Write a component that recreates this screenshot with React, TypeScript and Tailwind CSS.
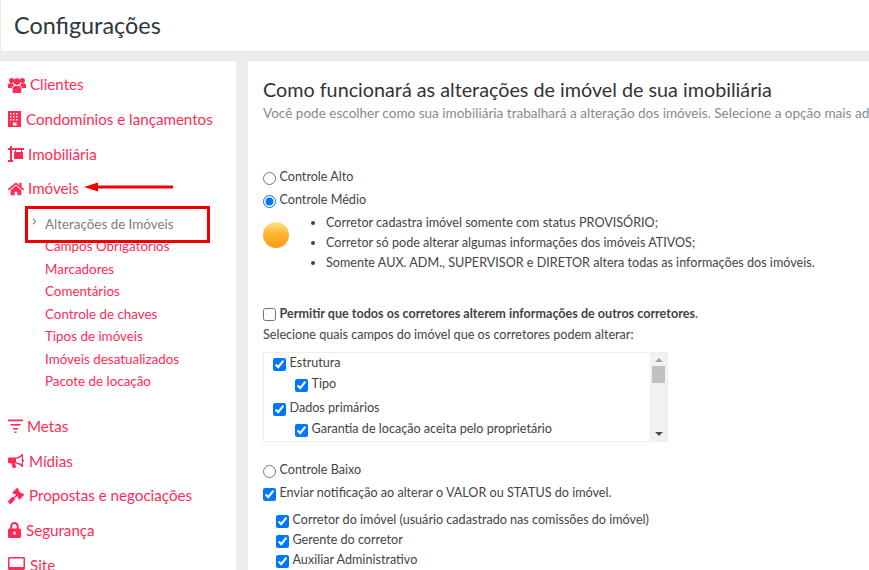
import React from "react";
import { FaHome, FaGavel, FaChevronRight } from "react-icons/fa";

const Svg = ({ w, h, children }: { w: number; h: number; children: React.ReactNode }) => (
  <svg width={w} height={h} viewBox={`0 0 ${w} ${h}`} fill="currentColor" className="shrink-0">{children}</svg>
);

const Users = () => (
  <Svg w={18} h={16}>
    <circle cx="3.6" cy="3.4" r="2.5" />
    <circle cx="14.4" cy="3.4" r="2.5" />
    <circle cx="9" cy="4.6" r="3.3" />
    <path d="M0 11V8.3C0 7 1 6.3 2.2 6.3H4.6C4.9 7.4 5.4 8 6 8.6 4.7 9.1 4 10 3.8 11.2Z" />
    <path d="M18 11V8.3C18 7 17 6.3 15.8 6.3H13.4C13.1 7.4 12.6 8 12 8.6 13.3 9.1 14 10 14.2 11.2Z" />
    <path d="M4.7 15.2V11.6C4.7 9.9 5.8 8.9 7 8.9H11C12.2 8.9 13.3 9.9 13.3 11.6V15.2C13.3 15.8 12.8 16 12.2 16H5.8C5.2 16 4.7 15.8 4.7 15.2Z" />
  </Svg>
);

const Building = () => (
  <Svg w={13} h={16}>
    <path fillRule="evenodd" d="M0 0H13V16H0ZM2 2V3.5H3.5V2ZM5 2V3.5H6.5V2ZM8 2V3.5H9.5V2ZM2 5V6.5H3.5V5ZM5 5V6.5H6.5V5ZM8 5V6.5H9.5V5ZM2 8V9.5H3.5V8ZM5 8V9.5H6.5V8ZM8 8V9.5H9.5V8ZM5 11.5V14.5H8.5V11.5Z" />
  </Svg>
);

const Sign = () => (
  <Svg w={16} h={16}>
    <rect x="2" y="0" width="2" height="16" />
    <rect x="0" y="2" width="16" height="2" />
    <rect x="0" y="14" width="5" height="2" />
    <rect x="6" y="6" width="9" height="7" />
    <rect x="7" y="4" width="1" height="2" />
    <rect x="13" y="4" width="1" height="2" />
  </Svg>
);

const Filter = () => (
  <Svg w={15} h={15}>
    <rect x="0" y="0.5" width="15" height="1.8" />
    <rect x="2.5" y="5" width="10" height="1.6" />
    <rect x="5" y="9" width="5" height="1.5" />
    <rect x="6.5" y="12.5" width="2" height="1.5" />
  </Svg>
);

const Bullhorn = () => (
  <Svg w={16} h={14}>
    <path fillRule="evenodd" d="M14 0H15V5.2C15.8 5.5 16 6 16 6.5 16 7 15.8 7.5 15 7.8V13H14C12 10.8 9.5 9.5 7 9.2L8.3 13.2 6.3 14H4.8L3.4 9.3H1.5C.6 9.3 0 8.7 0 7.8V5C0 4.1.6 3.5 1.5 3.5H6.5C9.5 3.5 12 2.2 14 0ZM13.8 2.2C12.2 3.5 10.2 4.4 8 4.8V8C10.2 8.4 12.2 9.3 13.8 10.6Z" />
  </Svg>
);

const Lock = () => (
  <Svg w={13} h={16}>
    <path fillRule="evenodd" d="M2.2 6.5V4.4C2.2 1.9 4.1 0 6.5 0S10.8 1.9 10.8 4.4V6.5H11.5C12.3 6.5 13 7.2 13 8V14.5C13 15.3 12.3 16 11.5 16H1.5C.7 16 0 15.3 0 14.5V8C0 7.2.7 6.5 1.5 6.5ZM4.3 6.5H8.7V4.4C8.7 3.1 7.7 2.1 6.5 2.1S4.3 3.1 4.3 4.4ZM5.4 9.5V12.5H7.6V9.5Z" />
  </Svg>
);

const Desktop = () => (
  <Svg w={17} h={16}>
    <path fillRule="evenodd" d="M1.5 0H15.5C16.3 0 17 .7 17 1.5V11.5C17 12.3 16.3 13 15.5 13H10.5V14.5H12V16H5V14.5H6.5V13H1.5C.7 13 0 12.3 0 11.5V1.5C0 .7.7 0 1.5 0ZM1.5 1.5V10H15.5V1.5Z" />
  </Svg>
);

const Check = () => (
  <input type="checkbox" defaultChecked readOnly className="m-0 h-[13px] w-[13px] shrink-0 accent-[#0075ff]" />
);

function NavItem({ icon, label, gap }: { icon: React.ReactNode; label: string; gap: string }) {
  return (
    <div className={"flex h-[34.6px] items-center text-[15.15px] text-[#ff2b55] " + gap}>
      {icon}
      <span>{label}</span>
    </div>
  );
}

const subs = ["Campos Obrigatórios", "Marcadores", "Comentários", "Controle de chaves", "Tipos de imóveis", "Imóveis desatualizados", "Pacote de locação"];

export default function App() {
  return (
    <div className="h-[570px] w-[869px] overflow-hidden bg-[#ececec] text-[12.6px] text-[#444]" style={{ fontFamily: "Lato, 'Liberation Sans', sans-serif" }}>
      <header className="ml-[1px] flex h-[51px] items-center bg-white pl-[13px] text-[23.4px] text-[#2e3740]">
        Configurações
      </header>
      <div className="mt-[10px] flex gap-[12px]">
        <aside className="relative h-[509px] w-[236px] shrink-0 overflow-hidden bg-white pl-[8px] pt-[6.5px]">
          <NavItem icon={<Users />} label="Clientes" gap="gap-[4px]" />
          <NavItem icon={<Building />} label="Condomínios e lançamentos" gap="gap-[5px]" />
          <NavItem icon={<Sign />} label="Imobiliária" gap="gap-[4px]" />
          <NavItem icon={<FaHome size={16} />} label="Imóveis" gap="gap-[4px]" />
          <div className="mt-[4.5px] flex h-[27px] items-center pl-[37px] text-[13.4px] text-[#7d7d7d]">Alterações de Imóveis</div>
          <div className="-mt-[2.5px] pl-[37px] text-[13.4px] text-[#ff2b55]">
            {subs.map((s) => (
              <div key={s} className="flex h-[22.5px] items-center">{s}</div>
            ))}
          </div>
          <div className="mt-[17px]">
            <NavItem icon={<Filter />} label="Metas" gap="gap-[4px]" />
            <NavItem icon={<Bullhorn />} label="Mídias" gap="gap-[5px]" />
            <NavItem icon={<FaGavel size={16} />} label="Propostas e negociações" gap="gap-[5px]" />
            <NavItem icon={<Lock />} label="Segurança" gap="gap-[5px]" />
            <NavItem icon={<Desktop />} label="Site" gap="gap-[5px]" />
          </div>
          <FaChevronRight size={7} className="absolute left-[31px] top-[157px] text-[#888]" />
          <div className="absolute left-[25px] top-[145px] h-[37px] w-[185px] border-[3px] border-[#f00000]" />
          <svg className="absolute left-[84px] top-[119px]" width="90" height="14" viewBox="0 0 90 14">
            <rect x="10" y="5.5" width="79" height="3" fill="#f00000" />
            <polygon points="0,7 14,2.5 14,11.5" fill="#f00000" />
          </svg>
        </aside>
        <main className="h-[509px] min-w-0 flex-1 overflow-hidden bg-white pl-[15px] pt-[16px]">
          <h1 className="whitespace-nowrap text-[19.75px] leading-[26px] text-[#333]">Como funcionará as alterações de imóvel de sua imobiliária</h1>
          <p className="mt-[1px] whitespace-nowrap text-[13.55px] leading-[18px] text-[#8a8a8a]">
            Você pode escolher como sua imobiliária trabalhará a alteração dos imóveis. Selecione a opção mais adequada
          </p>
          <label className="mt-[45px] flex h-[23px] items-center gap-[3.5px]">
            <input type="radio" name="c" className="m-0 h-[13px] w-[13px]" />
            <span className="-mt-[3px]">Controle Alto</span>
          </label>
          <label className="flex h-[23px] items-center gap-[3.5px]">
            <input type="radio" name="c" defaultChecked className="m-0 h-[13px] w-[13px] accent-[#0075ff]" />
            <span className="-mt-[3px]">Controle Médio</span>
          </label>
          <div className="flex items-center">
            <div className="-mt-[16px] h-[26px] w-[26px] rounded-full bg-[linear-gradient(#ffe48a,#ffb52e_45%,#ff9a1a)]" />
            <ul className="ml-[37px] list-disc">
              <li className="h-[20px] leading-[20px]">Corretor cadastra imóvel somente com status PROVISÓRIO;</li>
              <li className="h-[20px] leading-[20px]">Corretor só pode alterar algumas informações dos imóveis ATIVOS;</li>
              <li className="h-[20px] leading-[20px]">Somente AUX. ADM., SUPERVISOR e DIRETOR altera todas as informações dos imóveis.</li>
            </ul>
          </div>
          <label className="mt-[31px] flex h-[20px] items-center gap-[3.5px]">
            <input type="checkbox" className="m-0 h-[13px] w-[13px]" />
            <span><b className="font-bold">Permitir que todos os corretores alterem informações de outros corretores</b>.</span>
          </label>
          <p className="mt-[1px] h-[20px] leading-[20px]">Selecione quais campos do imóvel que os corretores podem alterar:</p>
          <div className="mt-[7px] flex h-[90px] w-[405px] border border-[#eeeeee]">
            <div className="flex-1 pl-[9px] pt-[1px]">
              <div className="flex h-[21px] items-center gap-[3.5px]"><Check /><span className="-mt-[2px]">Estrutura</span></div>
              <div className="flex h-[21px] items-center gap-[3.5px] pl-[22px]"><Check /><span className="-mt-[2px]">Tipo</span></div>
              <div className="mt-[3px] flex h-[21px] items-center gap-[3.5px]"><Check /><span className="-mt-[2px]">Dados primários</span></div>
              <div className="flex h-[21px] items-center gap-[3.5px] pl-[22px]"><Check /><span className="-mt-[2px]">Garantia de locação aceita pelo proprietário</span></div>
            </div>
            <div className="flex w-[17px] flex-col items-center bg-[#f1f1f1] pt-[5px]">
              <div className="h-0 w-0 border-x-[4px] border-b-[4px] border-x-transparent border-b-[#a3a3a3]" />
              <div className="mt-[4px] h-[17px] w-[13px] bg-[#c1c1c1]" />
              <div className="mt-auto mb-[5px] h-0 w-0 border-x-[4px] border-t-[4px] border-x-transparent border-t-[#505050]" />
            </div>
          </div>
          <label className="mt-[18px] flex h-[23px] items-center gap-[3.5px]">
            <input type="radio" name="c2" className="m-0 h-[13px] w-[13px]" />
            <span className="-mt-[3px]">Controle Baixo</span>
          </label>
          <label className="flex h-[22px] items-center gap-[3.5px]">
            <Check />
            <span className="-mt-[1px]">Enviar notificação ao alterar o VALOR ou STATUS do imóvel.</span>
          </label>
          <div className="mt-[6px] pl-[13px]">
            <div className="flex h-[20px] items-center gap-[3.5px]"><Check /><span className="-mt-[1px]">Corretor do imóvel (usuário cadastrado nas comissões do imóvel)</span></div>
            <div className="flex h-[20px] items-center gap-[3.5px]"><Check /><span className="-mt-[1px]">Gerente do corretor</span></div>
            <div className="flex h-[20px] items-center gap-[3.5px]"><Check /><span className="-mt-[1px]">Auxiliar Administrativo</span></div>
          </div>
        </main>
      </div>
    </div>
  );
}
